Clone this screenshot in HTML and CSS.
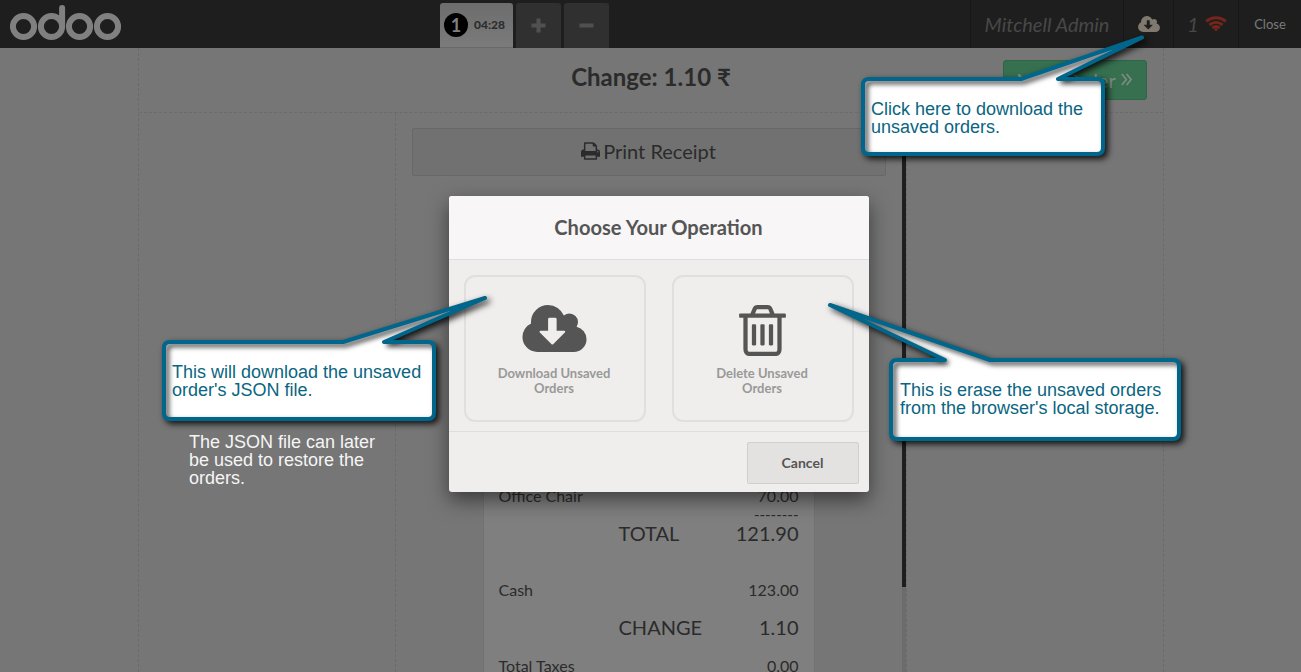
FILE: index.html
```
<!DOCTYPE html>
<html lang="en">
<head>
<meta charset="utf-8">
<title>Point of Sale</title>
<link rel="stylesheet" href="styles.css">
</head>
<body>
<svg class="defs" width="0" height="0">
  <symbol id="i-cloud" viewBox="0 128 1920 1408"><path d="M1280 928q0-14-9-23t-23-9h-224v-352q0-13-9.500-22.500t-22.500-9.500h-192q-13 0-22.500 9.500t-9.500 22.500v352h-224q-13 0-22.500 9.500t-9.500 22.500q0 14 9 23l352 352q9 9 23 9t23-9l351-351q10-12 10-24zm640 224q0 159-112.500 271.500t-271.500 112.500h-1088q-185 0-316.500-131.500t-131.500-316.500q0-130 70-240t188-165q-2-30-2-43 0-212 150-362t362-150q156 0 285.500 87t188.500 231q71-62 166-62 106 0 181 75t75 181q0 76-41 138 130 31 213.500 135.500t83.500 238.500z"/></symbol>
  <symbol id="i-trash" viewBox="0 128 1408 1536"><path d="M512 736v576q0 14-9 23t-23 9h-64q-14 0-23-9t-9-23v-576q0-14 9-23t23-9h64q14 0 23 9t9 23zm256 0v576q0 14-9 23t-23 9h-64q-14 0-23-9t-9-23v-576q0-14 9-23t23-9h64q14 0 23 9t9 23zm256 0v576q0 14-9 23t-23 9h-64q-14 0-23-9t-9-23v-576q0-14 9-23t23-9h64q14 0 23 9t9 23zm128 724v-948h-896v948q0 22 7 40.500t14.500 27 10.500 8.500h832q3 0 10.500-8.500t14.500-27 7-40.500zm-672-1076h448l-48-117q-7-9-17-11h-317q-10 2-17 11zm928 32v64q0 14-9 23t-23 9h-96v948q0 83-47 143.500t-113 60.500h-832q-66 0-113-58.500t-47-141.500v-952h-96q-14 0-23-9t-9-23v-64q0-14 9-23t23-9h309l70-167q15-37 54-63t79-26h320q40 0 79 26t54 63l70 167h309q14 0 23 9t9 23z"/></symbol>
  <symbol id="i-print" viewBox="0 128 1664 1536"><path d="M384 1536h896v-256h-896v256zm0-640h896v-384h-160q-40 0-68-28t-28-68v-160h-640v640zm1152 64q0-26-19-45t-45-19-45 19-19 45 19 45 45 19 45-19 19-45zm128 0v416q0 13-9.500 22.500t-22.500 9.500h-224v160q0 40-28 68t-68 28h-960q-40 0-68-28t-28-68v-160h-224q-13 0-22.500-9.500t-9.500-22.500v-416q0-79 56.500-135.500t135.500-56.500h64v-544q0-40 28-68t68-28h672q40 0 88 20t76 48l152 152q28 28 48 76t20 88v256h64q79 0 135.500 56.500t56.500 135.500z"/></symbol>
</svg>

<div class="pos">
  <header class="topbar">
    <svg class="logo" width="112" height="36" viewBox="0 0 112 36" fill="none" stroke="currentColor" stroke-width="6" stroke-linecap="round">
      <circle cx="13.500" cy="21.500" r="10.600"/><circle cx="41.500" cy="21.500" r="10.600"/>
      <circle cx="69.500" cy="21.500" r="10.600"/><circle cx="97.500" cy="21.500" r="10.600"/>
      <path d="M52.100 21.500V3"/>
    </svg>
    <nav class="orders">
      <div class="order-tab"><span class="order-no">1</span><span class="order-time">04:28</span></div>
      <div class="square-btn"><svg width="15" height="15" viewBox="0 0 15 15"><path d="M5.500 0.500h4v5h5v4h-5v5h-4v-5h-5v-4h5z"/></svg></div>
      <div class="square-btn"><svg width="15" height="15" viewBox="0 0 15 15"><path d="M0.500 5.500h14v4h-14z"/></svg></div>
    </nav>
    <div class="status">
      <div class="cell user">Mitchell Admin</div>
      <div class="cell download"><svg width="22" height="16"><use href="#i-cloud"/></svg></div>
      <div class="cell sync"><span>1</span>
        <svg width="22" height="16" viewBox="0 0 22 16" fill="none" stroke="currentColor" stroke-width="3"><path d="M1.200 5.400C7 .400 15 .400 20.800 5.400M4.400 8.900c4-3.300 9.200-3.300 13.200 0M7.400 12c2.200-1.800 5-1.800 7.200 0"/><path d="M8.600 12.800q2.400-1 4.800 0L11 15.600z" fill="currentColor" stroke="none"/></svg>
      </div>
      <div class="cell close">Close</div>
    </div>
  </header>

  <main class="screen">
    <div class="screen-head">
      <h1>Change: 1.10 ₹</h1>
      <div class="next">Next Order <svg width="11" height="13" viewBox="0 0 11 13" fill="none" stroke="currentColor" stroke-width="1.800"><path d="M.800 1l4.500 5.500L.800 12M5.600 1l4.500 5.500L5.600 12"/></svg></div>
    </div>
    <div class="columns">
      <div class="side"></div>
      <div class="center">
        <div class="center-body">
          <div class="print"><svg width="19" height="18"><use href="#i-print"/></svg><span>Print Receipt</span></div>
          <div class="receipt">
            <div class="line item"><span>Office Chair</span><span>70.00</span></div>
            <div class="line dashes"><span></span><span>--------</span></div>
            <div class="line total"><span>TOTAL</span><span>121.90</span></div>
            <div class="line cash"><span>Cash</span><span>123.00</span></div>
            <div class="line total change"><span>CHANGE</span><span>1.10</span></div>
            <div class="line taxes"><span>Total Taxes</span><span>0.00</span></div>
          </div>
        </div>
        <div class="scrollbar"><div class="thumb"></div></div>
      </div>
      <div class="side last"></div>
    </div>
  </main>
</div>

<section class="modal">
  <h2>Choose Your Operation</h2>
  <div class="choices">
    <div class="choice"><svg width="65" height="47"><use href="#i-cloud"/></svg><span>Download Unsaved Orders</span></div>
    <div class="choice"><svg width="47" height="51"><use href="#i-trash"/></svg><span>Delete Unsaved Orders</span></div>
  </div>
  <footer><div class="cancel">Cancel</div></footer>
</section>

<svg class="callouts" width="1301" height="672" viewBox="0 0 1301 672">
  <defs>
    <path id="c1" d="M869 79H1021L1142 37.500L1058 79H1097Q1103 79 1103 85V148Q1103 154 1097 154H869Q863 154 863 148V85Q863 79 869 79Z"/>
    <path id="c2" d="M170 342H343L485 298L384 342H428Q434 342 434 348V413Q434 419 428 419H170Q164 419 164 413V348Q164 342 170 342Z"/>
    <path id="c3" d="M897 360H945L830 305L990 360H1173Q1179 360 1179 366V433Q1179 439 1173 439H897Q891 439 891 433V366Q891 360 897 360Z"/>
    <clipPath id="k1"><use href="#c1"/></clipPath>
    <clipPath id="k2"><use href="#c2"/></clipPath>
    <clipPath id="k3"><use href="#c3"/></clipPath>
  </defs>
  <g class="callout"><use href="#c1" class="fill"/><g clip-path="url(#k1)"><use href="#c1" class="inner"/></g><use href="#c1" class="edge"/></g>
  <g class="callout"><use href="#c2" class="fill"/><g clip-path="url(#k2)"><use href="#c2" class="inner"/></g><use href="#c2" class="edge"/></g>
  <g class="callout"><use href="#c3" class="fill"/><g clip-path="url(#k3)"><use href="#c3" class="inner"/></g><use href="#c3" class="edge"/></g>
</svg>
<p class="note note-click">Click here to download the<br>unsaved orders.</p>
<p class="note note-json">This will download the unsaved<br>order's JSON file.</p>
<p class="note note-erase">This is erase the unsaved orders<br>from the browser's local storage.</p>
<p class="note note-restore">The JSON file can later<br>be used to restore the<br>orders.</p>
</body>
</html>
```
FILE: styles.css
```
* { box-sizing: border-box; }
body { margin: 0; width: 1301px; height: 672px; overflow: hidden; position: relative; font-family: Lato, sans-serif; color: #2b2b2b; background: #767676; }
h1, h2, p { margin: 0; }
svg { display: block; fill: currentColor; flex: none; }
.defs { position: absolute; }
.pos { height: 672px; display: flex; flex-direction: column; }

.topbar { height: 48px; flex: none; display: flex; background: #1e1e1e; }
.logo { margin: 5px 0 0 10px; color: #808080; fill: none; }
.orders { display: flex; gap: 3px; margin-left: 318px; padding-top: 3px; }
.order-tab { width: 73px; border-radius: 3px 3px 0 0; background: linear-gradient(#6d6d6d, #7b7b7b); border-bottom: 1px solid #696969; display: flex; align-items: center; padding: 0 0 1px 4px; gap: 6px; }
.order-no { width: 24px; height: 24px; border-radius: 50%; background: #000; color: #808080; font-size: 18px; font-weight: 700; line-height: 24px; text-align: center; }
.order-time { font-size: 12px; font-weight: 900; color: #2d2d2d; padding-bottom: 1px; }
.square-btn { width: 45px; border-radius: 3px 3px 0 0; background: #303030; color: #505050; display: flex; align-items: center; justify-content: center; padding-bottom: 1px; }
.status { display: flex; margin-left: auto; }
.cell { display: flex; align-items: center; justify-content: center; border-left: 1px solid #171717; }
.user { width: 153px; font-size: 20px; font-style: italic; color: #484848; }
.download { width: 50px; color: #80796f; }
.sync { width: 65px; gap: 6px; padding-left: 2px; font-size: 20px; font-style: italic; color: #484848; }
.sync svg { color: #74261b; fill: none; }
.close { width: 63px; font-size: 13px; color: #7b7b7b; padding-bottom: 1px; }

.screen { flex: 1; min-height: 0; margin-left: 138px; width: 1026px; border: 1px dashed #6b6b6b; border-width: 0 1px; display: flex; flex-direction: column; }
.screen-head { height: 65px; flex: none; border-bottom: 1px dashed #6b6b6b; position: relative; display: flex; justify-content: center; padding-top: 14px; }
h1 { font-size: 24px; line-height: 30px; font-weight: 700; color: #2b2b2b; }
.next { position: absolute; right: 16px; top: 12px; width: 144px; height: 40px; border: 1px solid #2f6549; border-radius: 3px; background: #36704f; color: #7c8a82; font-size: 20px; display: flex; align-items: center; justify-content: center; gap: 5px; padding: 0 2px 1px 0; }
.next svg { fill: none; }
.columns { flex: 1; min-height: 0; display: flex; }
.side { width: 257px; border-right: 1px dashed #6b6b6b; }
.side.last { border-right: 0; border-left: 1px dashed #6b6b6b; }
.center { width: 510px; display: flex; }
.center-body { width: 506px; padding: 15px 16px 0; }
.print { width: 474px; height: 48px; border: 1px solid #686868; border-radius: 2px; background: #717171; display: flex; align-items: center; justify-content: center; gap: 3px; padding: 0 1px 2px 0; font-size: 20px; }
.receipt { margin: 32px 0 0 71px; width: 332px; height: 500px; border: 1px solid #727272; background: #7f7f7f; padding: 277px 15.5px 0 14.5px; font-size: 16px; }
.line { display: flex; justify-content: space-between; line-height: 20px; }
.dashes { line-height: 17px; font-size: 15px; }
.total { padding-left: 120px; font-size: 20px; }
.cash { margin-top: 37px; }
.change { margin-top: 17px; }
.taxes { margin-top: 19px; }
.scrollbar { width: 4px; background: #6c6c6c; }
.thumb { height: 474px; background: #1e1e1e; }

.modal { position: absolute; left: 449px; top: 196px; width: 420px; height: 296px; border-radius: 3px; background: #efeeec; box-shadow: 0 8px 20px rgba(0,0,0,.5); color: #555; }
h2 { height: 64px; border-radius: 3px 3px 0 0; background: #f8f6f7; border-bottom: 1px solid #dedede; text-align: center; font-size: 20.1px; line-height: 63px; font-weight: 700; padding-right: 1px; }
.choices { display: flex; gap: 26px; height: 171px; padding: 15px; }
.choice { width: 182px; height: 147px; border: 2px solid #dfdfdd; border-radius: 11px; display: flex; flex-direction: column; align-items: center; justify-content: flex-start; padding: 28px 33px 0 31px; }
.choice span { margin-top: auto; margin-bottom: 24px; text-align: center; font-size: 13px; line-height: 15px; font-weight: 700; color: #999; width: 130px; padding: 0 8px; }
footer { border-top: 1px solid #dedede; padding: 10px; display: flex; justify-content: flex-end; }
.cancel { width: 112px; height: 42px; border: 1px solid #cfcfcd; border-radius: 2px; background: #e3e2e1; font-size: 14px; font-weight: 700; line-height: 40px; text-align: center; padding-right: 1px; }

.callouts { position: absolute; left: 0; top: 0; }
.callout { filter: drop-shadow(3px 3px 3px rgba(0,0,0,.85)); }
.callout .fill { fill: #fff; }
.callout .inner { fill: none; stroke: #000; stroke-width: 4px; stroke-opacity: .75; transform: translate(3px, 3px); filter: blur(2.5px); }
.callout .edge { fill: none; stroke: #00668c; stroke-width: 4px; stroke-linejoin: round; }
.note { position: absolute; font: 18px/18px "Liberation Sans", Arial, sans-serif; color: #0a6581; white-space: nowrap; }
.note-click { left: 871px; top: 100px; }
.note-json { left: 172px; top: 363px; }
.note-erase { left: 900px; top: 381px; }
.note-restore { left: 189px; top: 433px; color: #f5f5f5; }
```
